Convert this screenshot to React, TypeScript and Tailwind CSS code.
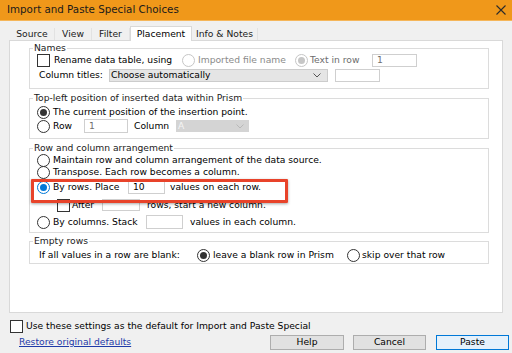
import { FC, ReactNode } from 'react';

const Radio: FC<{ checked?: boolean; tone?: 'dark' | 'blue' | 'off' }> = ({
  checked,
  tone = 'dark',
}) => {
  const ring = {
    dark: 'border-[#333333]',
    blue: 'border-[#0078d7]',
    off: 'border-[#c6c6c6]',
  }[tone];
  const dot = {
    dark: 'bg-[#333333]',
    blue: 'bg-[#0078d7]',
    off: 'bg-[#c6c6c6]',
  }[tone];
  return (
    <span
      className={`flex h-[13px] w-[13px] flex-shrink-0 items-center justify-center rounded-full border bg-white ${ring}`}
    >
      {checked && <span className={`h-[7px] w-[7px] rounded-full ${dot}`} />}
    </span>
  );
};

const Check: FC<{ className?: string }> = ({ className = '' }) => (
  <span
    className={`block h-[13px] w-[13px] flex-shrink-0 border border-[#333333] bg-white ${className}`}
  />
);

const Field: FC<{ w: string; h: string; value?: string; dim?: boolean }> = ({
  w,
  h,
  value,
  dim,
}) => (
  <span
    className={`flex flex-shrink-0 items-center border border-[#cfcfcf] bg-white pl-[4px] ${w} ${h} ${dim ? 'text-[#6d6d6d]' : 'text-black'}`}
  >
    {value}
  </span>
);

const Chevron = ({ color }: { color: string }) => (
  <svg width="8" height="5" viewBox="0 0 8 5" className="flex-shrink-0">
    <path d="M0.5 0.5 L4 4 L7.5 0.5" fill="none" stroke={color} strokeWidth="1" />
  </svg>
);

const Group: FC<{ label: string; className: string; children: ReactNode }> = ({
  label,
  className,
  children,
}) => (
  <div className={`relative w-[460px] border border-[#dcdcdc] bg-white ${className}`}>
    <span className="absolute left-[3px] top-[-7px] bg-white px-[1px] leading-[12px] text-[#1a1a1a]">
      {label}
    </span>
    {children}
  </div>
);

const tabs = [
  { name: 'Source', w: 'w-[45px]' },
  { name: 'View', w: 'w-[37px]' },
  { name: 'Filter', w: 'w-[38px]' },
  { name: 'Placement', w: 'w-[62px]', active: true },
  { name: 'Info & Notes', w: 'w-[66px]' },
];

export default function App() {
  return (
    <div
      className="flex h-[353px] w-[512px] flex-col overflow-hidden bg-[#f0f0f0] text-[9.2px] text-black"
      style={{ fontFamily: '"DejaVu Sans", Verdana, sans-serif' }}
    >
      {/* title bar */}
      <div className="flex h-[21px] flex-shrink-0 items-center justify-between border-b border-[#f5b65a] bg-[#f0981a] pl-[7px] pr-[6px]">
        <span className="text-[10.3px] text-[#1a1a1a]">Import and Paste Special Choices</span>
        <svg width="10" height="10" viewBox="0 0 10 10">
          <path d="M0.5 0.5 L9.5 9.5 M9.5 0.5 L0.5 9.5" stroke="#2b2b2b" strokeWidth="1.1" />
        </svg>
      </div>

      {/* tabs */}
      <div className="relative z-10 flex h-[19px] flex-shrink-0 items-end pl-[10px]">
        {tabs.map((t) =>
          t.active ? (
            <div
              key={t.name}
              className={`-mb-[1px] flex h-[15px] items-center justify-center border border-b-0 border-[#d9d9d9] bg-white pb-[1px] ${t.w}`}
            >
              {t.name}
            </div>
          ) : (
            <div
              key={t.name}
              className={`flex h-[12px] items-center justify-center border-r border-[#e2e2e2] text-[#1a1a1a] ${t.w}`}
            >
              {t.name}
            </div>
          ),
        )}
      </div>

      {/* tab panel */}
      <div className="mx-[9px] flex h-[273px] flex-shrink-0 flex-col border border-[#d9d9d9] bg-white pl-[19px] pt-[7px]">
        <Group label="Names" className="h-[41px] pt-[4px]">
          <div className="flex h-[14px] items-center pl-[7px]">
            <Check />
            <span className="ml-[4px] w-[128px]">Rename data table, using</span>
            <Radio tone="off" />
            <span className="ml-[3px] w-[97px] text-[#8a8a8a]">Imported file name</span>
            <Radio tone="off" checked />
            <span className="ml-[1px] w-[63px] pl-[1px] text-[#6d6d6d]">Text in row</span>
            <Field w="w-[45px]" h="h-[13px]" value="1" dim />
          </div>
          <div className="flex h-[16px] items-center pl-[9px]">
            <span className="w-[70px]">Column titles:</span>
            <span className="flex h-[13px] w-[219px] items-center justify-between border border-[#cccccc] bg-[#e5e5e5] pl-[1px] pr-[6px]">
              Choose automatically
              <Chevron color="#555" />
            </span>
            <span className="ml-[7px]">
              <Field w="w-[45px]" h="h-[13px]" />
            </span>
          </div>
        </Group>

        <Group label="Top-left position of inserted data within Prism" className="mt-[9px] h-[41px] pt-[6px]">
          <div className="flex h-[14px] items-center pl-[7px]">
            <Radio checked />
            <span className="ml-[3px]">The current position of the insertion point.</span>
          </div>
          <div className="flex h-[14px] items-center pl-[7px]">
            <Radio />
            <span className="ml-[3px] w-[31px]">Row</span>
            <Field w="w-[44px]" h="h-[14px]" value="1" dim />
            <span className="ml-[6px] w-[42px]">Column</span>
            <span className="flex h-[12px] w-[73px] items-center justify-between bg-[#d4d4d4] pl-[2px] pr-[5px] text-[#f4f4f4]">
              A
              <Chevron color="#b8b8b8" />
            </span>
          </div>
        </Group>

        <Group label="Row and column arrangement" className="relative mt-[9px] h-[85px] pt-[5px]">
          <div className="flex h-[12px] items-center pl-[7px]">
            <Radio />
            <span className="ml-[3px]">Maintain row and column arrangement of the data source.</span>
          </div>
          <div className="flex h-[12px] items-center pl-[7px]">
            <Radio />
            <span className="ml-[3px]">Transpose. Each row becomes a column.</span>
          </div>
          <div className="flex h-[18px] items-center pl-[7px]">
            <Radio checked tone="blue" />
            <span className="ml-[3px] w-[75px]">By rows. Place</span>
            <Field w="w-[37px]" h="h-[13px]" value="10" />
            <span className="ml-[5px]">values on each row.</span>
          </div>
          <div className="flex h-[18px] items-center pl-[27px]">
            <Check className="border-[#6b5a5a]" />
            <span className="ml-[2px] w-[30px]">After</span>
            <Field w="w-[38px]" h="h-[12px]" />
            <span className="ml-[7px]">rows, start a new column.</span>
          </div>
          <div className="flex h-[16px] items-center pl-[7px]">
            <Radio />
            <span className="ml-[3px] w-[93px]">By columns. Stack</span>
            <Field w="w-[37px]" h="h-[14px]" />
            <span className="ml-[7px]">values in each column.</span>
          </div>

          {/* highlight annotation */}
          <div className="absolute left-[1px] top-[30px] h-[24px] w-[257px] rounded-[1px] border-[3px] border-[#e8432a] shadow-[0_1px_3px_rgba(0,0,0,0.35)]" />
        </Group>

        <Group label="Empty rows" className="mt-[8px] h-[23px] pt-[6px]">
          <div className="flex h-[14px] items-center pl-[9px]">
            <span className="w-[158px]">If all values in a row are blank:</span>
            <Radio checked />
            <span className="ml-[3px] w-[134px]">leave a blank row in Prism</span>
            <Radio />
            <span className="ml-[2px]">skip over that row</span>
          </div>
        </Group>
      </div>

      {/* footer */}
      <div className="mt-[6px] flex h-[14px] items-center pl-[10px]">
        <Check />
        <span className="ml-[3px]">Use these settings as the default for Import and Paste Special</span>
      </div>
      <div className="mt-[1px] flex h-[16px] items-center pl-[19px] pr-[3px]">
        <span className="text-[#1f3aa8] underline">Restore original defaults</span>
        <div className="ml-auto flex gap-[9px]">
          <button className="flex h-[15px] w-[74px] items-center justify-center border border-[#adadad] bg-[#e1e1e1]">
            Help
          </button>
          <button className="flex h-[15px] w-[73px] items-center justify-center border border-[#adadad] bg-[#e1e1e1]">
            Cancel
          </button>
          <button className="ml-[1px] flex h-[15px] w-[73px] items-center justify-center border border-[#0078d7] bg-[#e5f1fb]">
            Paste
          </button>
        </div>
      </div>
    </div>
  );
}
